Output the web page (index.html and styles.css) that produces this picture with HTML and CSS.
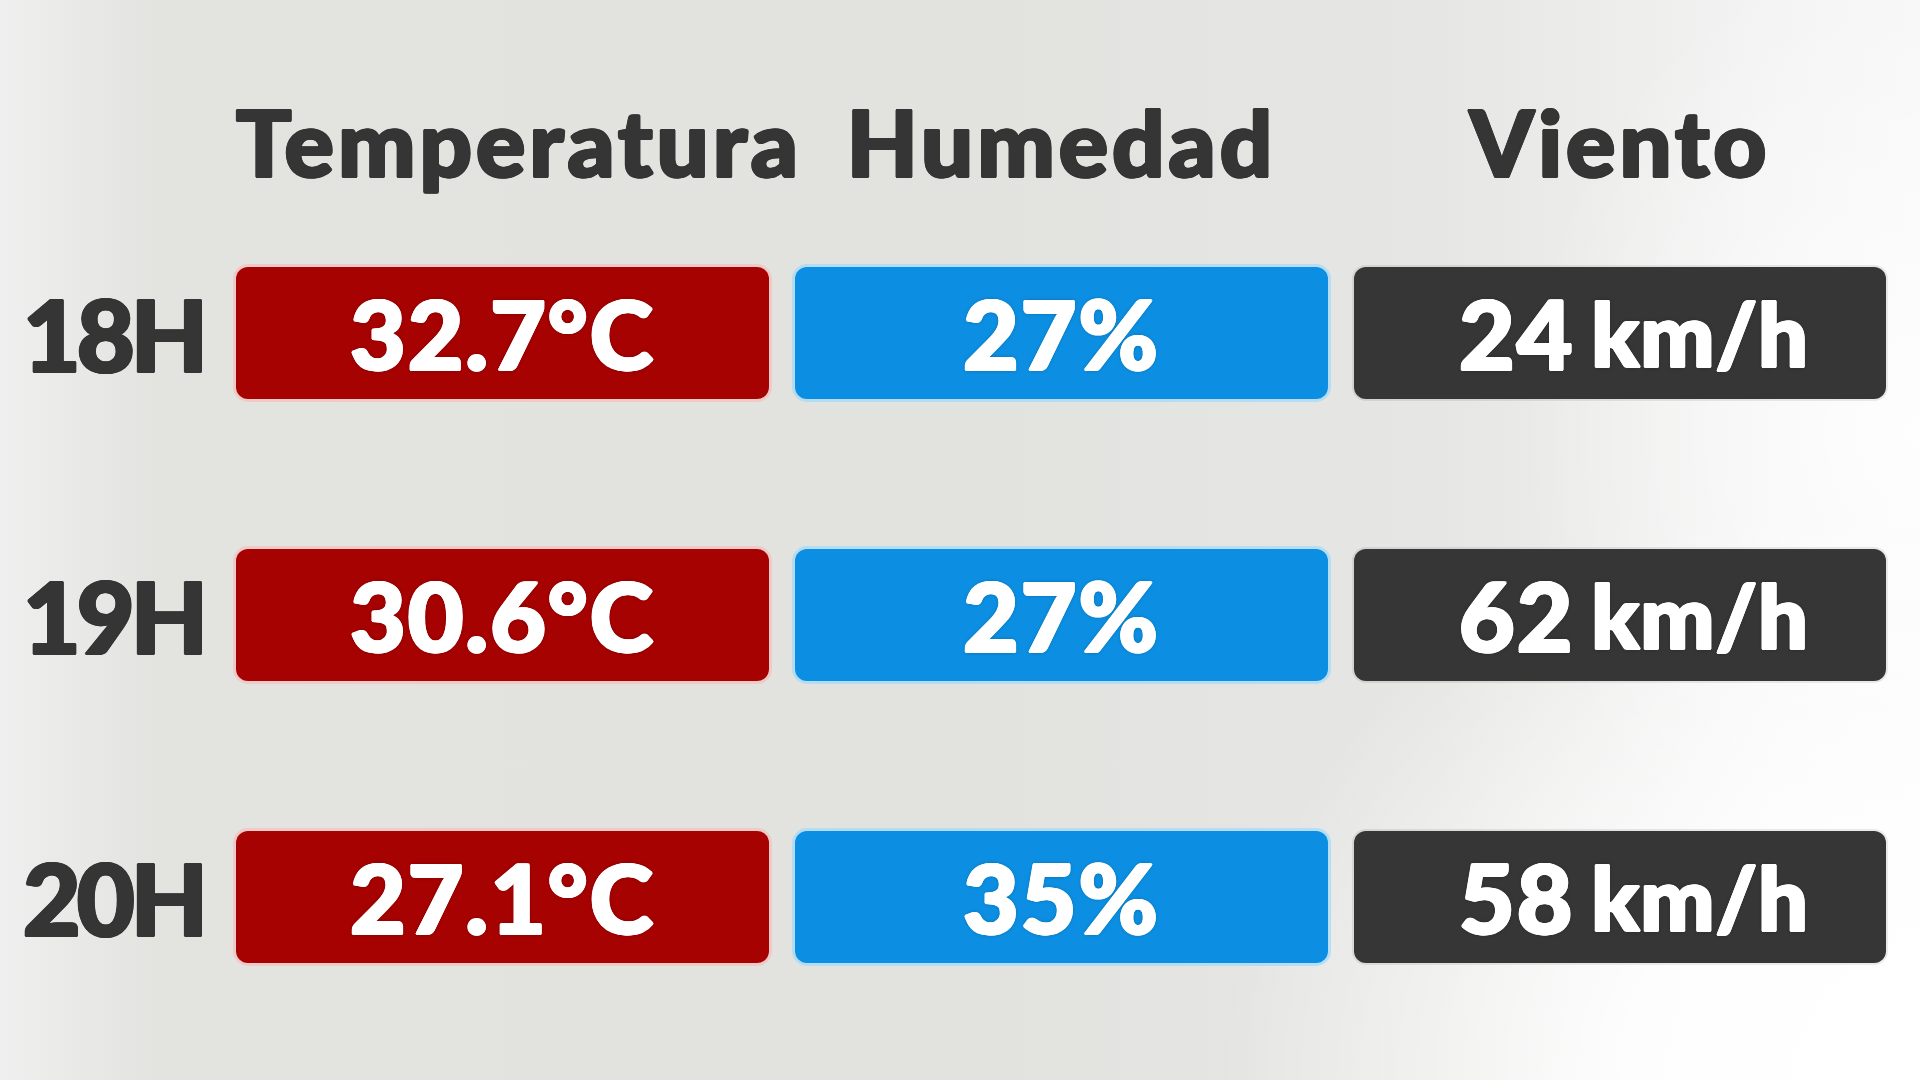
FILE: index.html
```html
<!DOCTYPE html>
<html lang="es">
<head>
    <meta charset="UTF-8">
    <meta name="viewport" content="width=device-width, initial-scale=1.0">
    <title>Pronóstico por hora</title>
    <link rel="stylesheet" href="styles.css">
</head>
<body>
    <div class="board">
        <!-- Cabecera de columnas -->
        <div class="row head-row">
            <div class="hour"></div>
            <div class="col-title">Temperatura</div>
            <div class="col-title">Humedad</div>
            <div class="col-title">Viento</div>
        </div>

        <div class="row data-row">
            <div class="hour">18H</div>
            <div class="cell temp">32.7°C</div>
            <div class="cell hum">27%</div>
            <div class="cell wind">24 <span class="unit">km/h</span></div>
        </div>

        <div class="row data-row">
            <div class="hour">19H</div>
            <div class="cell temp">30.6°C</div>
            <div class="cell hum">27%</div>
            <div class="cell wind">62 <span class="unit">km/h</span></div>
        </div>

        <div class="row data-row">
            <div class="hour">20H</div>
            <div class="cell temp">27.1°C</div>
            <div class="cell hum">35%</div>
            <div class="cell wind">58 <span class="unit">km/h</span></div>
        </div>
    </div>
</body>
</html>
```

FILE: styles.css
```css
html, body {
    height: 100%;
}
body {
    margin: 0;
    padding: 0;
    font-family: Lato, "Open Sans", sans-serif;
    font-weight: 900;
    color: #363636;
    overflow: hidden;
    background:
        radial-gradient(ellipse 700px 600px at 100% 100%, #ffffff 0%, rgba(255, 255, 255, 0.9) 40%, rgba(255, 255, 255, 0) 100%),
        radial-gradient(ellipse 400px 500px at 100% 40%, rgba(255, 255, 255, 0.85) 0%, rgba(255, 255, 255, 0) 100%),
        linear-gradient(to right, #efefef 0%, #e3e4e0 8%, #e2e3df 50%, #e6e6e4 75%, #f3f3f3 92%, #f7f7f7 100%);
}
.board {
    padding-top: 97px;
    display: flex;
    flex-direction: column;
}
.row {
    display: grid;
    grid-template-columns: 210px 533px 533px 532px;
    column-gap: 26px;
}
.head-row {
    margin-bottom: 80px;
}
.data-row {
    margin-bottom: 150px;
}
/* texto "grueso": sombras de 1px alrededor de la letra */
.col-title,
.hour {
    color: #353535;
    text-shadow:
        1.5px 0 0 #353535, -1.5px 0 0 #353535,
        0 1px 0 #353535, 0 -1px 0 #353535,
        1px 1px 0 #353535, -1px -1px 0 #353535,
        1px -1px 0 #353535, -1px 1px 0 #353535;
}
.col-title {
    font-size: 92px;
    line-height: 90px;
    text-align: center;
    letter-spacing: 4px;
}
.hour {
    font-size: 100px;
    line-height: 132px;
    text-align: right;
    padding-right: 6px;
    letter-spacing: -4px;
}
.cell {
    height: 132px;
    border-radius: 12px;
    display: flex;
    align-items: center;
    justify-content: center;
    color: #fff;
    font-size: 96px;
    line-height: 1;
    letter-spacing: 2px;
    text-shadow:
        1.5px 0 0 #fff, -1.5px 0 0 #fff,
        0 1px 0 #fff, 0 -1px 0 #fff,
        1px 1px 0 #fff, -1px -1px 0 #fff,
        1px -1px 0 #fff, -1px 1px 0 #fff,
        0 0 4px rgba(0, 0, 0, 0.4);
}
.temp {
    background-color: #a60202;
    box-shadow: 0 0 0 3px rgba(255, 170, 170, 0.45);
}
.hum {
    background-color: #0c8fe2;
    box-shadow: 0 0 0 3px rgba(150, 215, 255, 0.6);
}
.wind {
    background-color: #363636;
    box-shadow: 0 0 0 2px rgba(0, 0, 0, 0.08);
    white-space: pre;
    padding-left: 28px;
    box-sizing: border-box;
}
.unit {
    font-size: 88px;
    letter-spacing: 1px;
    margin-left: -8px;
}
```
